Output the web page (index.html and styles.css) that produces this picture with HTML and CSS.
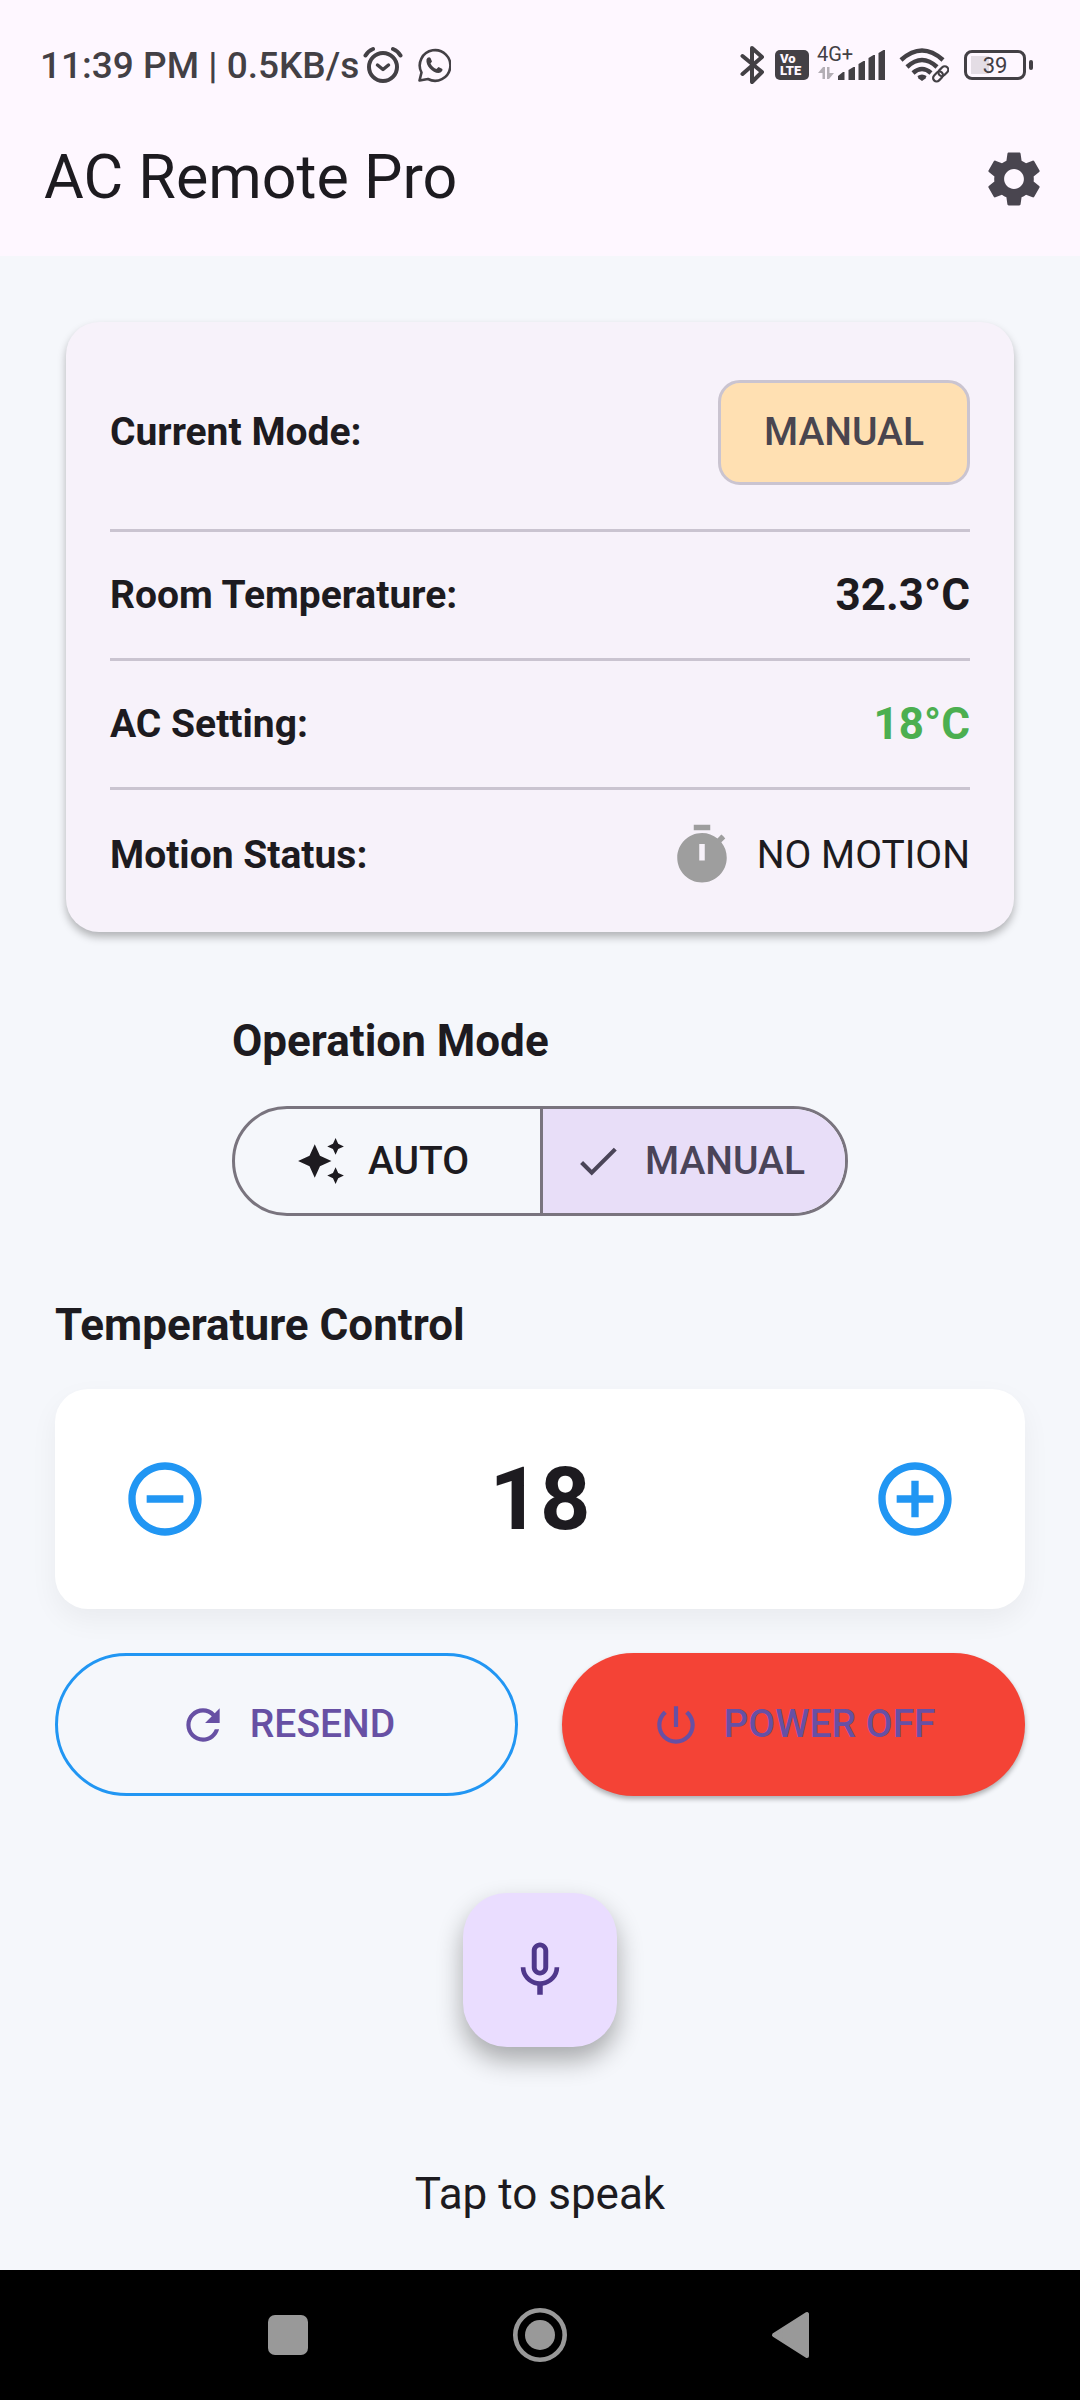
FILE: index.html
```html
<!DOCTYPE html>
<html lang="en">
<head>
<meta charset="utf-8">
<meta name="viewport" content="width=device-width, initial-scale=1">
<title>AC Remote Pro</title>
<link rel="stylesheet" href="styles.css">
</head>
<body>
<div class="screen">
  <header class="top">
    <div class="status-bar">
      <div class="status-left">
        <span class="clock">11:39 PM | 0.5KB/s</span>
        <svg class="alarm" width="40" height="38" viewBox="0 0 40 38" fill="none" stroke="currentColor" stroke-linecap="round" stroke-linejoin="round" aria-label="Alarm set">
          <circle cx="20" cy="21" r="14" stroke-width="4"/>
          <path d="M2.500 9.500Q5 5 10 3M37.500 9.500Q35 5 30 3" stroke-width="4"/>
          <path d="M14.500 19l5.500 4.500 5.500-4.500" stroke-width="3.500"/>
        </svg>
        <svg class="chat" width="34" height="36" viewBox="0 0 34 36" fill="none" stroke="currentColor" aria-label="New message">
          <path d="M2.500 33.500l2-8A15.300 15.300 0 1 1 11 32z" stroke-width="2.600" stroke-linejoin="round"/>
          <path d="M9.500 12.500c1-2.500 3-3 4-1.500l1.500 3.500-1.500 2c1.500 3 3.500 4.500 6 5.500l2-2 3.500 1.800c1.500 1.200-.5 4-3.500 4.200-6 0-13-7.500-12-13.500z" fill="currentColor" stroke="none"/>
        </svg>
      </div>
      <div class="status-right">
        <svg class="bluetooth" width="25" height="40" viewBox="0 0 25 40" fill="none" stroke="currentColor" stroke-width="4" stroke-linecap="round" stroke-linejoin="round" aria-label="Bluetooth">
          <path d="M2.500 11L22 27 12 37V3l10 9L2.500 29"/>
        </svg>
        <span class="volte"><span>Vo</span><span>LTE</span></span>
        <div class="mobile">
          <span class="network">4G+</span>
          <svg width="68" height="32" viewBox="0 0 68 32" fill="currentColor" aria-label="Mobile signal">
            <path d="M1 24l5-6h2v12H5.500v-6zM17 24l-5 6h-2V18h2.500v6z" opacity=".4"/>
            <path d="M21 31v-4l5-4h1.500v8zM31.500 31V21l5-3H38v13zM41.500 31V15l5-3H48v19zM51.500 31V9l5-3H58v25zM61.500 31V4l5-3H68v30z"/>
          </svg>
        </div>
        <svg class="wifi" width="50" height="36" viewBox="0 0 50 36" fill="none" stroke="currentColor" aria-label="Wi-Fi">
          <path d="M2 13Q23-6 44 13M8 20Q23 6 38 20M14 26Q23 18 32 26" stroke-width="4.500"/>
          <path d="M18.500 29q4.500-3 9 0l-1 2.500-3.500 2.500-3.500-2.500z" fill="currentColor" stroke="none"/>
          <g transform="rotate(-45 41.500 27)" stroke-width="2.200">
            <rect x="32.500" y="23.500" width="11" height="7" rx="3.500"/>
            <rect x="40" y="23.500" width="11" height="7" rx="3.500"/>
          </g>
        </svg>
        <div class="battery"><span class="battery-body">39</span><span class="battery-tip"></span></div>
      </div>
    </div>
    <div class="app-bar">
      <h1>AC Remote Pro</h1>
      <button class="icon-button" type="button" aria-label="Settings">
        <svg width="66" height="66" viewBox="0 0 24 24" fill="currentColor"><path d="M19.140 12.940c.04-.3.06-.61.06-.94 0-.32-.02-.64-.07-.94l2.030-1.580c.18-.14.23-.41.12-.61l-1.920-3.320c-.12-.22-.37-.29-.59-.22l-2.390.96c-.5-.38-1.030-.7-1.620-.94l-.36-2.540c-.04-.24-.24-.41-.48-.41h-3.840c-.24 0-.43.17-.47.41l-.36 2.540c-.59.24-1.130.57-1.620.94l-2.390-.96c-.22-.08-.47 0-.59.22L2.740 8.870c-.12.21-.08.47.12.61l2.030 1.580c-.05.3-.09.63-.09.94s.02.64.07.94l-2.030 1.580c-.18.14-.23.41-.12.61l1.920 3.320c.12.22.37.29.59.22l2.390-.96c.5.38 1.030.7 1.620.94l.36 2.540c.05.24.24.41.48.41h3.840c.24 0 .44-.17.47-.41l.36-2.540c.59-.24 1.130-.56 1.620-.94l2.390.96c.22.08.47 0 .59-.22l1.920-3.320c.12-.22.07-.47-.12-.61l-2.010-1.580zM12 15.600c-1.980 0-3.600-1.620-3.600-3.600s1.620-3.600 3.600-3.600 3.600 1.620 3.600 3.600-1.620 3.600-3.600 3.600z"/></svg>
      </button>
    </div>
  </header>

  <main class="content">
    <dl class="status-card">
      <div class="row row-tall"><dt>Current Mode:</dt><dd class="chip">MANUAL</dd></div>
      <div class="row"><dt>Room Temperature:</dt><dd class="reading">32.3°C</dd></div>
      <div class="row"><dt>AC Setting:</dt><dd class="reading reading-set">18°C</dd></div>
      <div class="row"><dt>Motion Status:</dt>
        <dd class="motion">
          <svg width="66" height="66" viewBox="0 0 24 24" fill="currentColor" aria-hidden="true"><path d="M15 1H9v2h6V1zm4.030 6.390 1.420-1.420c-.43-.51-.9-.99-1.410-1.410l-1.420 1.420C16.070 4.740 14.120 4 12 4c-4.970 0-9 4.030-9 9s4.020 9 9 9 9-4.030 9-9c0-2.120-.74-4.070-1.970-5.610zM13 14h-2V8h2v6z"/></svg>
          <span>NO MOTION</span>
        </dd>
      </div>
    </dl>

    <section class="mode">
      <h2>Operation Mode</h2>
      <div class="segments" role="group" aria-label="Operation Mode">
        <button class="segment" type="button" aria-pressed="false">
          <svg width="50" height="50" viewBox="0 0 24 24" fill="currentColor" aria-hidden="true"><path d="M19 9l1.250-2.750L23 5l-2.750-1.250L19 1l-1.250 2.750L15 5l2.750 1.250L19 9zm-7.500.5L9 4 6.500 9.500 1 12l5.500 2.500L9 20l2.500-5.500L17 12l-5.500-2.500zM19 15l-1.250 2.750L15 19l2.750 1.250L19 23l1.250-2.750L23 19l-2.750-1.250L19 15z"/></svg>
          AUTO
        </button>
        <button class="segment" type="button" aria-pressed="true">
          <svg width="50" height="50" viewBox="0 0 24 24" fill="currentColor" aria-hidden="true"><path d="M9 16.170 4.830 12l-1.420 1.410L9 19 21 7l-1.410-1.410z"/></svg>
          MANUAL
        </button>
      </div>
    </section>

    <section class="temperature">
      <h2>Temperature Control</h2>
      <div class="stepper">
        <button class="icon-button step" type="button" aria-label="Lower temperature">
          <svg width="88" height="88" viewBox="0 0 24 24" fill="currentColor"><path d="M7 11v2h10v-2H7zm5-9C6.480 2 2 6.480 2 12s4.480 10 10 10 10-4.480 10-10S17.520 2 12 2zm0 18c-4.410 0-8-3.590-8-8s3.590-8 8-8 8 3.590 8 8-3.590 8-8 8z"/></svg>
        </button>
        <output class="target">18</output>
        <button class="icon-button step" type="button" aria-label="Raise temperature">
          <svg width="88" height="88" viewBox="0 0 24 24" fill="currentColor"><path d="M13 7h-2v4H7v2h4v4h2v-4h4v-2h-4V7zm-1-5C6.480 2 2 6.480 2 12s4.480 10 10 10 10-4.480 10-10S17.520 2 12 2zm0 18c-4.410 0-8-3.590-8-8s3.590-8 8-8 8 3.590 8 8-3.590 8-8 8z"/></svg>
        </button>
      </div>
      <div class="actions">
        <button class="action action-outline" type="button">
          <svg width="50" height="50" viewBox="0 0 24 24" fill="currentColor" aria-hidden="true"><path d="M17.650 6.350C16.200 4.900 14.210 4 12 4c-4.420 0-7.990 3.580-7.990 8s3.570 8 7.990 8c3.730 0 6.840-2.550 7.730-6h-2.080c-.82 2.330-3.040 4-5.650 4-3.310 0-6-2.690-6-6s2.690-6 6-6c1.660 0 3.140.69 4.220 1.780L13 11h7V4l-2.350 2.350z"/></svg>
          RESEND
        </button>
        <button class="action action-danger" type="button">
          <svg width="50" height="50" viewBox="0 0 24 24" fill="currentColor" aria-hidden="true"><path d="M13 3h-2v10h2V3zm4.830 2.170-1.420 1.420C17.990 7.860 19 9.810 19 12c0 3.870-3.130 7-7 7s-7-3.130-7-7c0-2.190 1.010-4.140 2.580-5.420L6.170 5.170C4.230 6.820 3 9.260 3 12c0 4.970 4.030 9 9 9s9-4.030 9-9c0-2.740-1.230-5.180-3.170-6.830z"/></svg>
          POWER OFF
        </button>
      </div>
    </section>

    <section class="voice">
      <button class="mic" type="button" aria-label="Speak">
        <svg width="66" height="66" viewBox="0 0 24 24" fill="currentColor"><path d="M12 14c1.660 0 2.990-1.340 2.990-3L15 5c0-1.660-1.340-3-3-3S9 3.340 9 5v6c0 1.660 1.340 3 3 3zm-1.200-9.100c0-.66.54-1.200 1.200-1.200.66 0 1.200.54 1.200 1.200l-.01 6.200c0 .66-.53 1.200-1.190 1.200-.66 0-1.200-.54-1.200-1.200V4.900zm6.500 6.100c0 3-2.540 5.100-5.300 5.100S6.700 14 6.700 11H5c0 3.410 2.720 6.230 6 6.720V21h2v-3.280c3.280-.48 6-3.300 6-6.720h-1.700z"/></svg>
      </button>
      <p>Tap to speak</p>
    </section>
  </main>

  <nav class="system-nav" aria-label="System">
    <button type="button" aria-label="Recent apps"><svg width="56" height="56" viewBox="0 0 56 56" fill="currentColor"><rect x="8" y="8" width="40" height="40" rx="7"/></svg></button>
    <button type="button" aria-label="Home"><svg width="56" height="56" viewBox="0 0 56 56"><circle cx="28" cy="28" r="24.700" fill="none" stroke="currentColor" stroke-width="4.600"/><circle cx="28" cy="28" r="15" fill="currentColor"/></svg></button>
    <button type="button" aria-label="Back"><svg width="56" height="56" viewBox="0 0 56 56" fill="currentColor" stroke="currentColor" stroke-width="4" stroke-linejoin="round"><path d="M10 28L43 7v42z"/></svg></button>
  </nav>
</div>
</body>
</html>
```
FILE: styles.css
```css
:root {
  --surface: #fef7ff;
  --page: #f5f7fb;
  --ink: #1d1b20;
  --muted: #49454f;
  --line: #cac4d0;
  --primary: #6750a4;
  --blue: #2196f3;
}

* {
  box-sizing: border-box;
}

body {
  margin: 0;
  background: var(--page);
  color: var(--ink);
  font-family: Roboto, "Liberation Sans", sans-serif;
  font-size: 39px;
  line-height: 55px;
}

h1, h2, p, dl, dd {
  margin: 0;
}

button {
  margin: 0;
  padding: 0;
  border: 0;
  background: none;
  color: inherit;
  font: inherit;
  cursor: pointer;
}

svg {
  display: block;
  flex: none;
}

.screen {
  display: flex;
  flex-direction: column;
  min-height: 100vh;
}

/* Status bar and app bar */
.top {
  background: var(--surface);
}

.status-bar {
  display: flex;
  justify-content: space-between;
  align-items: center;
  height: 102px;
  padding: 28px 47px 0 40px;
  color: #434045;
}

.status-left,
.status-right,
.mobile,
.battery {
  display: flex;
  align-items: center;
}

.clock {
  font-size: 37px;
  font-weight: 500;
}

.alarm {
  margin-left: 4px;
}

.chat {
  margin-left: 14px;
}

.volte {
  display: flex;
  flex-direction: column;
  justify-content: center;
  width: 34px;
  height: 30px;
  margin-left: 10px;
  padding-left: 5px;
  border-radius: 5px;
  background: currentColor;
  font-size: 13px;
  font-weight: 900;
  line-height: 12px;
}

.volte span {
  color: var(--surface);
}

.mobile {
  position: relative;
  margin-left: 8px;
}

.network {
  position: absolute;
  top: -5px;
  left: 0;
  font-size: 20px;
  line-height: 20px;
}

.wifi {
  margin-left: 14px;
}

.battery {
  gap: 3px;
  margin-left: 15px;
}

.battery-body {
  width: 62px;
  height: 30px;
  border: 3px solid currentColor;
  border-radius: 8px;
  background: linear-gradient(#e4dde5, #e4dde5) 4px 3px / 18px 18px no-repeat;
  font-size: 22px;
  line-height: 25px;
  text-align: center;
}

.battery-tip {
  width: 4px;
  height: 10px;
  border-radius: 2px;
  background: currentColor;
}

.app-bar {
  display: flex;
  justify-content: space-between;
  align-items: center;
  height: 154px;
  padding-left: 44px;
}

h1 {
  padding-bottom: 3px;
  font-size: 61px;
  font-weight: 400;
  line-height: 77px;
}

.icon-button {
  display: grid;
  place-items: center;
  width: 132px;
  height: 132px;
  border-radius: 50%;
  color: var(--muted);
}

/* Content */
.content {
  display: flex;
  flex: 1;
  flex-direction: column;
  padding: 66px 55px 33px;
}

h2 {
  font-size: 44px;
  font-weight: 700;
  line-height: 66px;
}

.status-card {
  margin: 0 11px;
  padding: 44px;
  border-radius: 33px;
  background: #f7f2fa;
  box-shadow: 0 5px 8px rgba(0, 0, 0, .28);
}

.row {
  display: flex;
  justify-content: space-between;
  align-items: center;
}

.row + .row {
  margin-top: 31px;
  padding-top: 32px;
  border-top: 3px solid var(--line);
}

.row-tall {
  min-height: 132px;
}

dt {
  font-weight: 700;
  line-height: 63px;
}

.chip {
  padding: 22px 43px;
  border: 3px solid var(--line);
  border-radius: 22px;
  background: #ffe0b2;
  color: var(--muted);
  font-weight: 500;
}

.reading {
  font-size: 44px;
  font-weight: 700;
  line-height: 63px;
}

.reading-set {
  color: #4caf50;
}

.motion {
  display: flex;
  align-items: center;
  gap: 22px;
}

.motion svg {
  color: #9e9e9e;
}

.mode {
  align-self: center;
  margin-top: 76px;
}

.segments {
  display: grid;
  grid-template-columns: 1fr 1fr;
  margin-top: 32px;
  overflow: hidden;
  border: 3px solid #79747e;
  border-radius: 55px;
}

.segment {
  display: flex;
  justify-content: center;
  align-items: center;
  gap: 22px;
  height: 104px;
  padding: 0 40px 0 30px;
  font-weight: 500;
}

.segment + .segment {
  border-left: 3px solid #79747e;
}

.segment[aria-pressed="true"] {
  background: #e8def8;
  color: #4a4458;
}

.temperature {
  margin-top: 76px;
}

.stepper {
  display: flex;
  justify-content: space-between;
  align-items: center;
  margin-top: 31px;
  padding: 44px;
  border-radius: 33px;
  background: #fff;
  box-shadow: 0 11px 28px rgba(0, 0, 0, .05);
}

.step {
  color: var(--blue);
}

.target {
  font-size: 88px;
  font-weight: 700;
  line-height: 132px;
}

.actions {
  display: grid;
  grid-template-columns: 1fr 1fr;
  gap: 44px;
  margin-top: 44px;
}

.action {
  display: flex;
  justify-content: center;
  align-items: center;
  gap: 22px;
  height: 143px;
  border-radius: 72px;
  color: var(--primary);
  font-weight: 500;
}

.action-outline {
  border: 3px solid var(--blue);
}

.action-danger {
  background: #f44336;
  box-shadow: 0 3px 5px rgba(0, 0, 0, .3);
}

.voice {
  display: flex;
  flex-direction: column;
  align-items: center;
  gap: 114px;
  margin-top: 97px;
}

.mic {
  display: grid;
  place-items: center;
  width: 154px;
  height: 154px;
  border-radius: 44px;
  background: #eaddff;
  color: #4f378b;
  box-shadow: 0 13px 26px rgba(0, 0, 0, .32);
}

.voice p {
  font-size: 44px;
  line-height: 66px;
}

/* System navigation */
.system-nav {
  display: flex;
  justify-content: center;
  align-items: center;
  gap: 196px;
  height: 130px;
  background: #000;
  color: #999;
}
```
